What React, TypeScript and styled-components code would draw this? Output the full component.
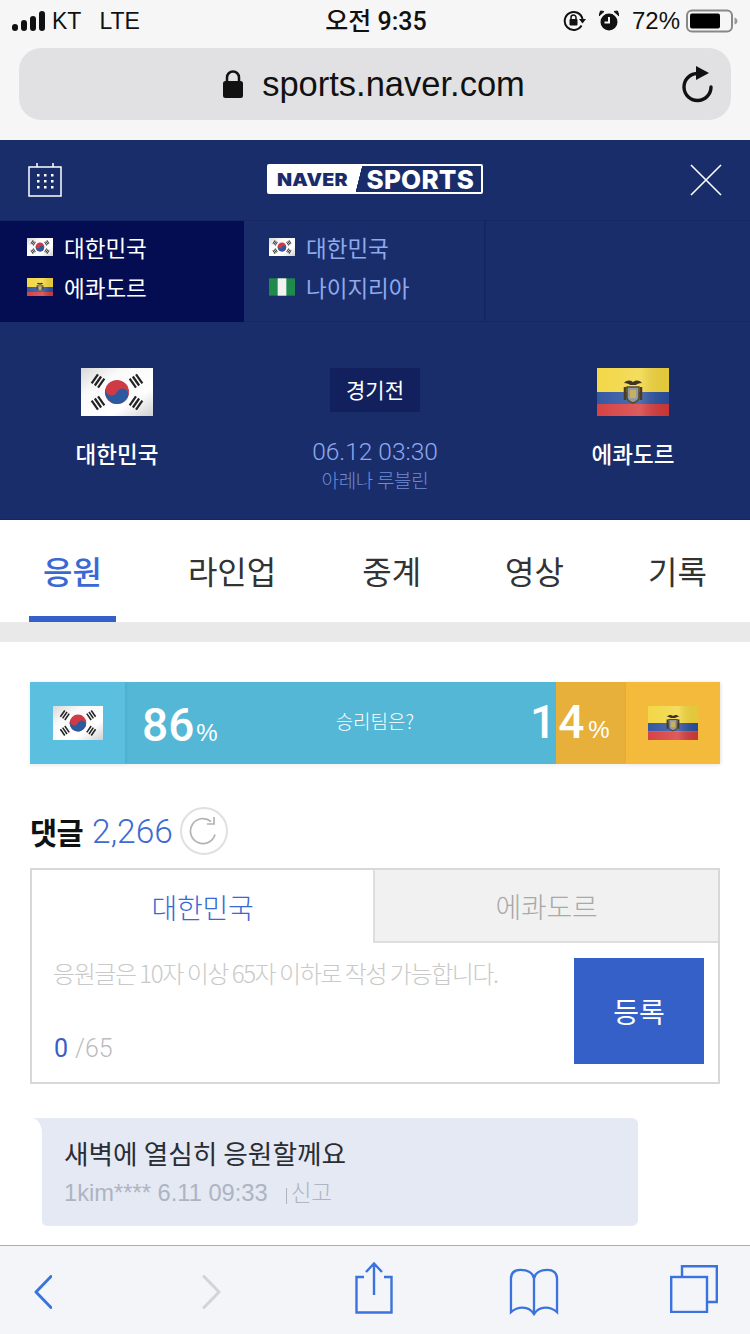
import React from "react";
import styled, { createGlobalStyle } from "styled-components";

const Global = createGlobalStyle`
  html, body { margin: 0; padding: 0; background: #fff; }
  * { box-sizing: border-box; }
  body { font-family: "Liberation Sans", "Noto Sans CJK KR", sans-serif; }
`;

const NAVY = "#1a2d6b";
const BLUE = "#3560c8";
const LIGHT = `Roboto, "Noto Sans CJK KR", sans-serif`;

const Page = styled.div`
  width: 750px;
  height: 1334px;
  display: flex;
  flex-direction: column;
  overflow: hidden;
  background: #fff;
`;

const Chrome = styled.div`
  height: 140px;
  flex: none;
  background: #f6f6f6;
  padding: 0 19px;
  display: flex;
  flex-direction: column;
`;
const StatusBar = styled.div`
  height: 48px;
  margin: 0 -19px;
  padding: 0 12px 6px;
  display: grid;
  grid-template-columns: 1fr auto 1fr;
  align-items: center;
  color: #111;
  font-size: 24px;
`;
const StatusLeft = styled.div`
  display: flex;
  align-items: center;
`;
const StatusRight = styled.div`
  display: flex;
  align-items: center;
  justify-content: flex-end;
`;
const Carrier = styled.span<{ $gap: number }>`
  margin-left: ${(p) => p.$gap}px;
  font-size: 23px;
`;
const Clock = styled.span`
  font-family: ${LIGHT};
  font-size: 25px;
  line-height: 30px;
  font-weight: 500;
  margin: 2px 0 0 2px;
`;
const Percent = styled.span`
  margin: 0 6px 0 13px;
  font-size: 24px;
`;
const UrlBar = styled.div`
  height: 72px;
  border-radius: 22px;
  background: #e1e1e3;
  position: relative;
  display: flex;
  align-items: center;
  justify-content: center;
  gap: 18px;
  padding-right: 3px;
  color: #111;
  font-size: 34.5px;
`;
const UrlReload = styled.span`
  position: absolute;
  right: 17px;
  top: 18px;
  display: flex;
`;

const Header = styled.header`
  height: 80px;
  flex: none;
  background: ${NAVY};
  display: flex;
  align-items: center;
  justify-content: space-between;
  padding: 0 28px 0 28px;
`;
const Logo = styled.div`
  width: 216px;
  height: 30px;
  margin: -2px 0 0 -2px;
  border: 2px solid #fff;
  border-radius: 2px;
  background: linear-gradient(104deg, #fff 0 42.5%, ${NAVY} 42.7%);
  display: flex;
  align-items: center;
  font-family: Inter, "Liberation Sans", sans-serif;
  font-weight: 900;
`;
const LogoNaver = styled.span`
  margin-left: 8px;
  font-size: 17.5px;
  letter-spacing: 0.2px;
  color: ${NAVY};
  transform: scaleX(1.12);
  transform-origin: left center;
`;
const LogoSports = styled.span`
  margin-left: auto;
  margin-right: 7px;
  font-size: 26px;
  font-weight: 800;
  letter-spacing: 0.2px;
  color: #fff;
`;

const Selector = styled.nav`
  height: 102px;
  flex: none;
  display: grid;
  grid-template-columns: 244px 242px 1fr;
  background: ${NAVY};
  border-top: 1px solid #172763;
  border-bottom: 1px solid #172763;
`;
const MatchCell = styled.div<{ $active?: boolean }>`
  background: ${(p) => (p.$active ? "#040d52" : NAVY)};
  border-right: 2px solid ${(p) => (p.$active ? "#040d52" : "#16265f")};
  padding: 6px 0 0 ${(p) => (p.$active ? 27 : 25)}px;
  color: ${(p) => (p.$active ? "#fff" : "#8ea9ee")};
  display: flex;
  flex-direction: column;
  margin-bottom: ${(p) => (p.$active ? -1 : 0)}px;
`;
const EmptyCell = styled.div``;
const MatchRow = styled.div`
  height: 40px;
  display: flex;
  align-items: center;
  gap: 11px;
  font-size: 22.5px;
  font-family: "Noto Sans CJK KR", sans-serif;
`;

const Hero = styled.section`
  height: 198px;
  flex: none;
  background: ${NAVY};
  display: grid;
  grid-template-columns: 234px 1fr 234px;
  padding-top: 46px;
  border-bottom: 1px solid #16265f;
`;
const Team = styled.div`
  display: flex;
  flex-direction: column;
  align-items: center;
  gap: 21px;
  color: #fff;
  font-size: 22.5px;
  font-weight: 500;
  line-height: 32px;
  font-family: "Noto Sans CJK KR", sans-serif;
`;
const Center = styled.div`
  display: flex;
  flex-direction: column;
  align-items: center;
`;
const Badge = styled.div`
  width: 90px;
  height: 44px;
  background: #12205e;
  color: #fff;
  display: flex;
  align-items: center;
  justify-content: center;
  padding-bottom: 2px;
  font-size: 21px;
  font-family: "Noto Sans CJK KR", sans-serif;
`;
const DateText = styled.div`
  margin-top: 25px;
  font-family: ${LIGHT};
  font-weight: 300;
  font-size: 24.5px;
  line-height: 30px;
  color: #8ea9ee;
`;
const Venue = styled.div`
  font-size: 19px;
  line-height: 26px;
  color: #6f8bd6;
  font-family: "Noto Sans CJK KR", sans-serif;
  font-weight: 300;
  letter-spacing: -0.3px;
`;

const Tabs = styled.div`
  height: 102px;
  flex: none;
  padding: 0 0 0 29px;
  display: flex;
  background: #fff;
`;
const Tab = styled.div<{ $active?: boolean; $gap?: number }>`
  margin-left: ${(p) => p.$gap ?? 0}px;
  padding: 27px 14px 0;
  font-size: 32px;
  line-height: 46px;
  font-family: "Noto Sans CJK KR", sans-serif;
  color: ${(p) => (p.$active ? "#3a69d4" : "#333")};
  font-weight: ${(p) => (p.$active ? 500 : 400)};
  border-bottom: 6px solid ${(p) => (p.$active ? BLUE : "transparent")};
`;
const Band = styled.div`
  height: 20px;
  flex: none;
  background: #e9e9e9;
`;

const Content = styled.main`
  flex: 1;
  min-height: 0;
  overflow: hidden;
  padding: 40px 30px 0;
`;

const VoteBar = styled.div`
  height: 82px;
  position: relative;
  display: flex;
  color: #fff;
  box-shadow: 0 2px 5px rgba(0, 0, 0, 0.06);
`;
const VoteFlag = styled.div<{ $bg: string }>`
  width: ${(p) => (p.$bg === "#f4ba3c" ? 94 : 95)}px;
  flex: none;
  background: ${(p) => p.$bg};
  display: flex;
  align-items: center;
  justify-content: center;
  box-shadow: 1px 0 3px rgba(0, 0, 0, 0.08);
  position: relative;
`;
const VoteHome = styled.div`
  flex: 1;
  background: #54b7d6;
  display: flex;
  align-items: center;
  padding-left: 17px;
`;
const VoteAway = styled.div`
  width: 70px;
  flex: none;
  background: #e6b03a;
`;
const Score = styled.span`
  font-family: ${LIGHT};
  font-size: 46px;
  font-weight: 500;
  line-height: 1;
  margin-top: 4px;
`;
const ScorePct = styled.span`
  font-family: "Liberation Sans", sans-serif;
  font-size: 24px;
  font-weight: 400;
  margin-left: 2px;
  letter-spacing: 0;
`;
const ScoreAway = styled(Score)`
  position: absolute;
  top: 17px;
  left: 500px;
  margin: 0;
  letter-spacing: 2px;
`;
const VoteQuestion = styled.span`
  font-size: 19px;
  margin-top: -6px;
  margin-left: 118px;
  font-family: "Noto Sans CJK KR", sans-serif;
  font-weight: 300;
`;

const CommentHead = styled.div`
  margin-top: 42px;
  height: 50px;
  display: flex;
  align-items: center;
  gap: 9px;
`;
const CommentLabel = styled.span`
  font-size: 29.5px;
  font-weight: 700;
  color: #111;
  font-family: "Noto Sans CJK KR", sans-serif;
  letter-spacing: -0.6px;
`;
const CommentCount = styled.span`
  font-family: ${LIGHT};
  font-weight: 300;
  font-size: 33.5px;
  color: #3f6ad0;
`;
const RefreshBtn = styled.span`
  width: 48px;
  height: 48px;
  margin-left: -2px;
  border: 2px solid #e0e0e0;
  border-radius: 50%;
  display: flex;
  align-items: center;
  justify-content: center;
`;

const Composer = styled.div`
  margin-top: 12px;
  height: 216px;
  border: 2px solid #d8d8d8;
  display: flex;
  flex-direction: column;
`;
const ComposerTabs = styled.div`
  height: 73px;
  flex: none;
  display: flex;
`;
const ComposerTab = styled.div<{ $active?: boolean }>`
  width: ${(p) => (p.$active ? 342 : 346)}px;
  display: flex;
  align-items: center;
  justify-content: center;
  font-size: 28px;
  font-weight: 300;
  font-family: "Noto Sans CJK KR", sans-serif;
  letter-spacing: -0.3px;
  color: ${(p) => (p.$active ? "#3a69d4" : "#a9a9a9")};
  background: ${(p) => (p.$active ? "#fff" : "#f1f1f1")};
  border-left: ${(p) => (p.$active ? "0" : "2px solid #dedede")};
  border-bottom: ${(p) => (p.$active ? "0" : "2px solid #dedede")};
`;
const ComposerBody = styled.div`
  flex: 1;
  display: flex;
  justify-content: space-between;
  padding: 15px 14px 18px 21px;
`;
const ComposerInput = styled.div`
  display: flex;
  flex-direction: column;
  justify-content: space-between;
`;
const Placeholder = styled.div`
  font-size: 24px;
  line-height: 30px;
  letter-spacing: -1.45px;
  font-weight: 300;
  color: #c9c9c9;
  font-family: "Noto Sans CJK KR", sans-serif;
`;
const Counter = styled.div`
  font-family: ${LIGHT};
  font-weight: 300;
  font-size: 25px;
  line-height: 30px;
  color: #bcbcbc;
  padding-left: 1px;
`;
const CounterNow = styled.span`
  color: ${BLUE};
  font-weight: 400;
  margin-right: 7px;
`;
const Submit = styled.div`
  width: 130px;
  height: 106px;
  background: ${BLUE};
  color: #fff;
  display: flex;
  align-items: center;
  justify-content: center;
  font-size: 28px;
  font-family: "Noto Sans CJK KR", sans-serif;
`;

const Bubble = styled.article`
  position: relative;
  margin: 34px 0 16px 12px;
  width: 596px;
  height: 108px;
  background: #e4e9f3;
  border-radius: 0 6px 6px 5px;
  padding: 15px 22px 0 22px;
  &::before {
    content: "";
    position: absolute;
    left: -10px;
    top: 0;
    width: 10px;
    height: 16px;
    background: #e4e9f3;
  }
  &::after {
    content: "";
    position: absolute;
    left: -10px;
    top: 0;
    width: 10px;
    height: 16px;
    background: #fff;
    border-top-right-radius: 10px 16px;
  }
`;
const BubbleText = styled.div`
  font-size: 26.7px;
  line-height: 40px;
  color: #2a2d33;
  font-family: "Noto Sans CJK KR", sans-serif;
`;
const BubbleMeta = styled.div`
  display: flex;
  align-items: center;
  font-size: 23.7px;
  line-height: 40px;
  color: #aeb4c2;
`;
const Report = styled.span`
  margin-left: 18px;
  padding-left: 5px;
  font-size: 22.5px;
  line-height: 20px;
  position: relative;
  top: -1px;
  font-family: "Noto Sans CJK KR", sans-serif;
  font-weight: 300;
  background: linear-gradient(#aeb4c2, #aeb4c2) left bottom / 1px 16px no-repeat;
  padding-bottom: 3px;
`;

const Toolbar = styled.footer`
  height: 89px;
  flex: none;
  background: #f3f5f9;
  border-top: 1px solid #a6aec4;
  padding-left: 34px;
  display: flex;
  align-items: flex-start;
`;
const ToolSlot = styled.span<{ $left: number; $top: number }>`
  display: flex;
  margin-left: ${(p) => p.$left}px;
  margin-top: ${(p) => p.$top}px;
`;

const Bars = ({ x, y, r }: { x: number; y: number; r: number }) => (
  <g transform={`translate(${x} ${y}) rotate(${r})`} fill="#222">
    <rect x="-5.500" y="-5" width="11" height="2.200" />
    <rect x="-5.500" y="-1.100" width="11" height="2.200" />
    <rect x="-5.500" y="2.800" width="11" height="2.200" />
  </g>
);

const KoreaFlag = ({ w, h }: { w: number; h: number }) => (
  <svg width={w} height={h} viewBox="0 0 72 48" preserveAspectRatio="none">
    <defs>
      <linearGradient id="krgloss" x1="0" y1="0" x2="1" y2="1">
        <stop offset="0" stopColor="#d8d8d8" />
        <stop offset="0.3" stopColor="#fafafa" />
        <stop offset="0.7" stopColor="#fff" />
        <stop offset="1" stopColor="#cfcfcf" />
      </linearGradient>
    </defs>
    <rect width="72" height="48" fill="url(#krgloss)" />
    <circle cx="36" cy="24" r="12" fill="#cf3a45" />
    <path
      transform="rotate(25 36 24)"
      d="M24 24A6 6 0 0 0 36 24A6 6 0 0 1 48 24A12 12 0 0 1 24 24Z"
      fill="#2c5aa0"
    />
    <Bars x={17} y={13} r={-55} />
    <Bars x={55} y={13} r={55} />
    <Bars x={17} y={35} r={55} />
    <Bars x={55} y={35} r={-55} />
  </svg>
);

const EcuadorFlag = ({ w, h }: { w: number; h: number }) => (
  <svg width={w} height={h} viewBox="0 0 72 48" preserveAspectRatio="none">
    <defs>
      <linearGradient id="ecu" x1="0" y1="0" x2="1" y2="0">
        <stop offset="0" stopColor="#fff" stopOpacity="0.05" />
        <stop offset="0.6" stopColor="#fff" stopOpacity="0.18" />
        <stop offset="1" stopColor="#000" stopOpacity="0.06" />
      </linearGradient>
    </defs>
    <rect width="72" height="24" fill="#f2d53c" />
    <rect y="24" width="72" height="12" fill="#2b4f9e" />
    <rect y="36" width="72" height="12" fill="#d4393a" />
    <rect width="72" height="48" fill="url(#ecu)" />
    <path d="M27 15c3-3 6-3 9-1 3-2 6-2 9 1-3 0-5 1-6 2h-6c-1-1-3-2-6-2Z" fill="#3d3425" />
    <path d="M30 19h12v10c0 3-3 5-6 6-3-1-6-3-6-6Z" fill="#8f9aa8" stroke="#5a4a20" strokeWidth="1.500" />
    <path d="M33 22h6v8h-6Z" fill="#c8b060" />
    <path d="M28 19v13M44 19v13" stroke="#4a3b22" strokeWidth="2.500" />
  </svg>
);

const NigeriaFlag = ({ w, h }: { w: number; h: number }) => (
  <svg width={w} height={h} viewBox="0 0 27 18">
    <rect width="27" height="18" fill="#1f8a4c" />
    <rect x="9" width="9" height="18" fill="#f2f2f2" />
  </svg>
);

const SignalIcon = () => (
  <svg width="34" height="20" viewBox="0 0 34 20">
    <rect x="0" y="13" width="6" height="7" rx="3" fill="#111" />
    <rect x="9" y="9" width="6" height="11" rx="3" fill="#111" />
    <rect x="18" y="5" width="6" height="15" rx="3" fill="#111" />
    <rect x="27" y="0" width="6" height="20" rx="3" fill="#111" />
  </svg>
);
const RotationLock = () => (
  <svg width="23" height="22" viewBox="0 0 23 22" fill="none">
    <path d="M18.500 15.500A9 9 0 1 1 19.500 9" stroke="#111" strokeWidth="2" />
    <path d="M16 9h7l-3.500 4.500Z" fill="#111" />
    <rect x="6.500" y="9" width="8" height="6.500" rx="1" fill="#111" />
    <path d="M8 9V7.500a2.500 2.500 0 0 1 5 0V9" stroke="#111" strokeWidth="1.500" />
  </svg>
);
const AlarmIcon = () => (
  <svg width="20" height="22" viewBox="0 0 20 22" style={{ marginLeft: 13 }}>
    <circle cx="10" cy="12" r="8.500" fill="#111" />
    <path d="M10 7v5.500H5.500" stroke="#f6f6f6" strokeWidth="2" fill="none" />
    <path d="M0 6 5 1.500 1.500 1ZM20 6 15 1.500 18.500 1Z" fill="#111" stroke="#111" />
  </svg>
);
const BatteryIcon = () => (
  <svg width="52" height="24" viewBox="0 0 52 24">
    <rect x="1" y="1.500" width="45" height="21" rx="5" fill="none" stroke="#888" strokeWidth="2" />
    <rect x="4" y="4.500" width="30" height="15" rx="2" fill="#000" />
    <path d="M48.500 8.500c2 .5 3 2 3 3.500s-1 3-3 3.500Z" fill="#999" />
  </svg>
);
const LockIcon = () => (
  <svg width="22" height="29" viewBox="0 0 22 29" fill="none">
    <path d="M5 12V7.500a6 6 0 0 1 12 0V12" stroke="#111" strokeWidth="2.500" />
    <rect x="1" y="11" width="20" height="17" rx="2.500" fill="#111" />
  </svg>
);
const ReloadIcon = () => (
  <svg width="32" height="38" viewBox="0 0 32 38" fill="none">
    <path d="M15 7.500A13.500 13.500 0 1 0 29 21" stroke="#111" strokeWidth="3.400" strokeLinecap="round" />
    <path d="M14 0 27 7 14 14Z" fill="#111" />
  </svg>
);
const CalendarIcon = () => (
  <svg width="34" height="34" viewBox="0 0 34 34" fill="none">
    <rect x="1" y="4" width="32" height="29" stroke="#fff" strokeWidth="1.500" />
    <path d="M9 0v4M25 0v4" stroke="#fff" strokeWidth="1.500" />
    {[12, 18, 24].map((y) =>
      [10, 17, 24].map((x) => <rect key={`${x}-${y}`} x={x - 1} y={y - 1} width="2.500" height="2.500" fill="#fff" />)
    )}
  </svg>
);
const CloseIcon = () => (
  <svg width="32" height="32" viewBox="0 0 32 32" stroke="#fff" strokeWidth="1.600">
    <path d="M1 1l30 30M31 1 1 31" />
  </svg>
);
const SmallRefresh = () => (
  <svg width="30" height="30" viewBox="0 0 30 30" fill="none" stroke="#b3b3b3" strokeWidth="1.700">
    <path d="M26 18.500A12.500 12.500 0 1 1 22 5.500" />
    <path d="M25 1v7h-7" />
  </svg>
);
const BackIcon = () => (
  <svg width="18" height="34" viewBox="0 0 18 34" fill="none" stroke="#3b73de" strokeWidth="3" strokeLinecap="round" strokeLinejoin="round">
    <path d="M17 1.500 2 17l15 15.500" />
  </svg>
);
const ForwardIcon = () => (
  <svg width="19" height="34" viewBox="0 0 19 34" fill="none" stroke="#d2d4d8" strokeWidth="3" strokeLinecap="round" strokeLinejoin="round">
    <path d="M2 1.500 17 17 2 32.500" />
  </svg>
);
const ShareIcon = () => (
  <svg width="38" height="52" viewBox="0 0 38 52" fill="none" stroke="#3b73de" strokeWidth="2.400">
    <path d="M9 15H1.500v35.500h35V15H29M19 33V1.500M11 10l8-8.500 8 8.500" />
  </svg>
);
const BookIcon = () => (
  <svg width="50" height="48" viewBox="0 0 52 50" fill="none" stroke="#3b73de" strokeWidth="2.400">
    <path d="M26 11C25 5 19 2 12 2 6 2 2 5 2 11v35c7-6 18-7 24 2 6-9 17-8 24-2V11c0-6-4-9-10-9-7 0-13 3-14 9Zm0 0v37" />
  </svg>
);
const PagesIcon = () => (
  <svg width="48" height="48" viewBox="0 0 48 48" fill="none" stroke="#3b73de" strokeWidth="2.400">
    <rect x="1.200" y="12" width="35.800" height="35" />
    <path d="M12 11.500V1.200h34.800V37H38" />
  </svg>
);

export default function App() {
  return (
    <Page>
      <Global />
      <Chrome>
        <StatusBar>
          <StatusLeft>
            <SignalIcon />
            <Carrier $gap={6}>KT</Carrier>
            <Carrier $gap={18}>LTE</Carrier>
          </StatusLeft>
          <Clock>오전 9:35</Clock>
          <StatusRight>
            <RotationLock />
            <AlarmIcon />
            <Percent>72%</Percent>
            <BatteryIcon />
          </StatusRight>
        </StatusBar>
        <UrlBar>
          <LockIcon />
          <span>sports.naver.com</span>
          <UrlReload><ReloadIcon /></UrlReload>
        </UrlBar>
      </Chrome>

      <Header>
        <CalendarIcon />
        <Logo>
          <LogoNaver>NAVER</LogoNaver>
          <LogoSports>SPORTS</LogoSports>
        </Logo>
        <CloseIcon />
      </Header>

      <Selector>
        <MatchCell $active>
          <MatchRow><KoreaFlag w={26} h={18} />대한민국</MatchRow>
          <MatchRow><EcuadorFlag w={26} h={18} />에콰도르</MatchRow>
        </MatchCell>
        <MatchCell>
          <MatchRow><KoreaFlag w={26} h={18} />대한민국</MatchRow>
          <MatchRow><NigeriaFlag w={26} h={18} />나이지리아</MatchRow>
        </MatchCell>
        <EmptyCell />
      </Selector>

      <Hero>
        <Team>
          <KoreaFlag w={72} h={48} />
          대한민국
        </Team>
        <Center>
          <Badge>경기전</Badge>
          <DateText>06.12 03:30</DateText>
          <Venue>아레나 루블린</Venue>
        </Center>
        <Team>
          <EcuadorFlag w={72} h={48} />
          에콰도르
        </Team>
      </Hero>

      <Tabs>
        <Tab $active>응원</Tab>
        <Tab $gap={58}>라인업</Tab>
        <Tab $gap={58}>중계</Tab>
        <Tab $gap={56}>영상</Tab>
        <Tab $gap={56}>기록</Tab>
      </Tabs>
      <Band />

      <Content>
        <VoteBar>
          <VoteFlag $bg="#5bc0e0"><KoreaFlag w={50} h={34} /></VoteFlag>
          <VoteHome>
            <Score>86<ScorePct>%</ScorePct></Score>
            <VoteQuestion>승리팀은?</VoteQuestion>
          </VoteHome>
          <VoteAway />
          <VoteFlag $bg="#f4ba3c"><EcuadorFlag w={50} h={34} /></VoteFlag>
          <ScoreAway>14<ScorePct>%</ScorePct></ScoreAway>
        </VoteBar>

        <CommentHead>
          <CommentLabel>댓글</CommentLabel>
          <CommentCount>2,266</CommentCount>
          <RefreshBtn><SmallRefresh /></RefreshBtn>
        </CommentHead>

        <Composer>
          <ComposerTabs>
            <ComposerTab $active>대한민국</ComposerTab>
            <ComposerTab>에콰도르</ComposerTab>
          </ComposerTabs>
          <ComposerBody>
            <ComposerInput>
              <Placeholder>응원글은 10자 이상 65자 이하로 작성 가능합니다.</Placeholder>
              <Counter><CounterNow>0</CounterNow>/65</Counter>
            </ComposerInput>
            <Submit>등록</Submit>
          </ComposerBody>
        </Composer>

        <Bubble>
          <BubbleText>새벽에 열심히 응원할께요</BubbleText>
          <BubbleMeta>
            1kim**** 6.11 09:33
            <Report>신고</Report>
          </BubbleMeta>
        </Bubble>
        <Bubble />
      </Content>

      <Toolbar>
        <ToolSlot $left={0} $top={29}><BackIcon /></ToolSlot>
        <ToolSlot $left={150} $top={29}><ForwardIcon /></ToolSlot>
        <ToolSlot $left={134} $top={16}><ShareIcon /></ToolSlot>
        <ToolSlot $left={116} $top={22}><BookIcon /></ToolSlot>
        <ToolSlot $left={111} $top={19}><PagesIcon /></ToolSlot>
      </Toolbar>
    </Page>
  );
}
